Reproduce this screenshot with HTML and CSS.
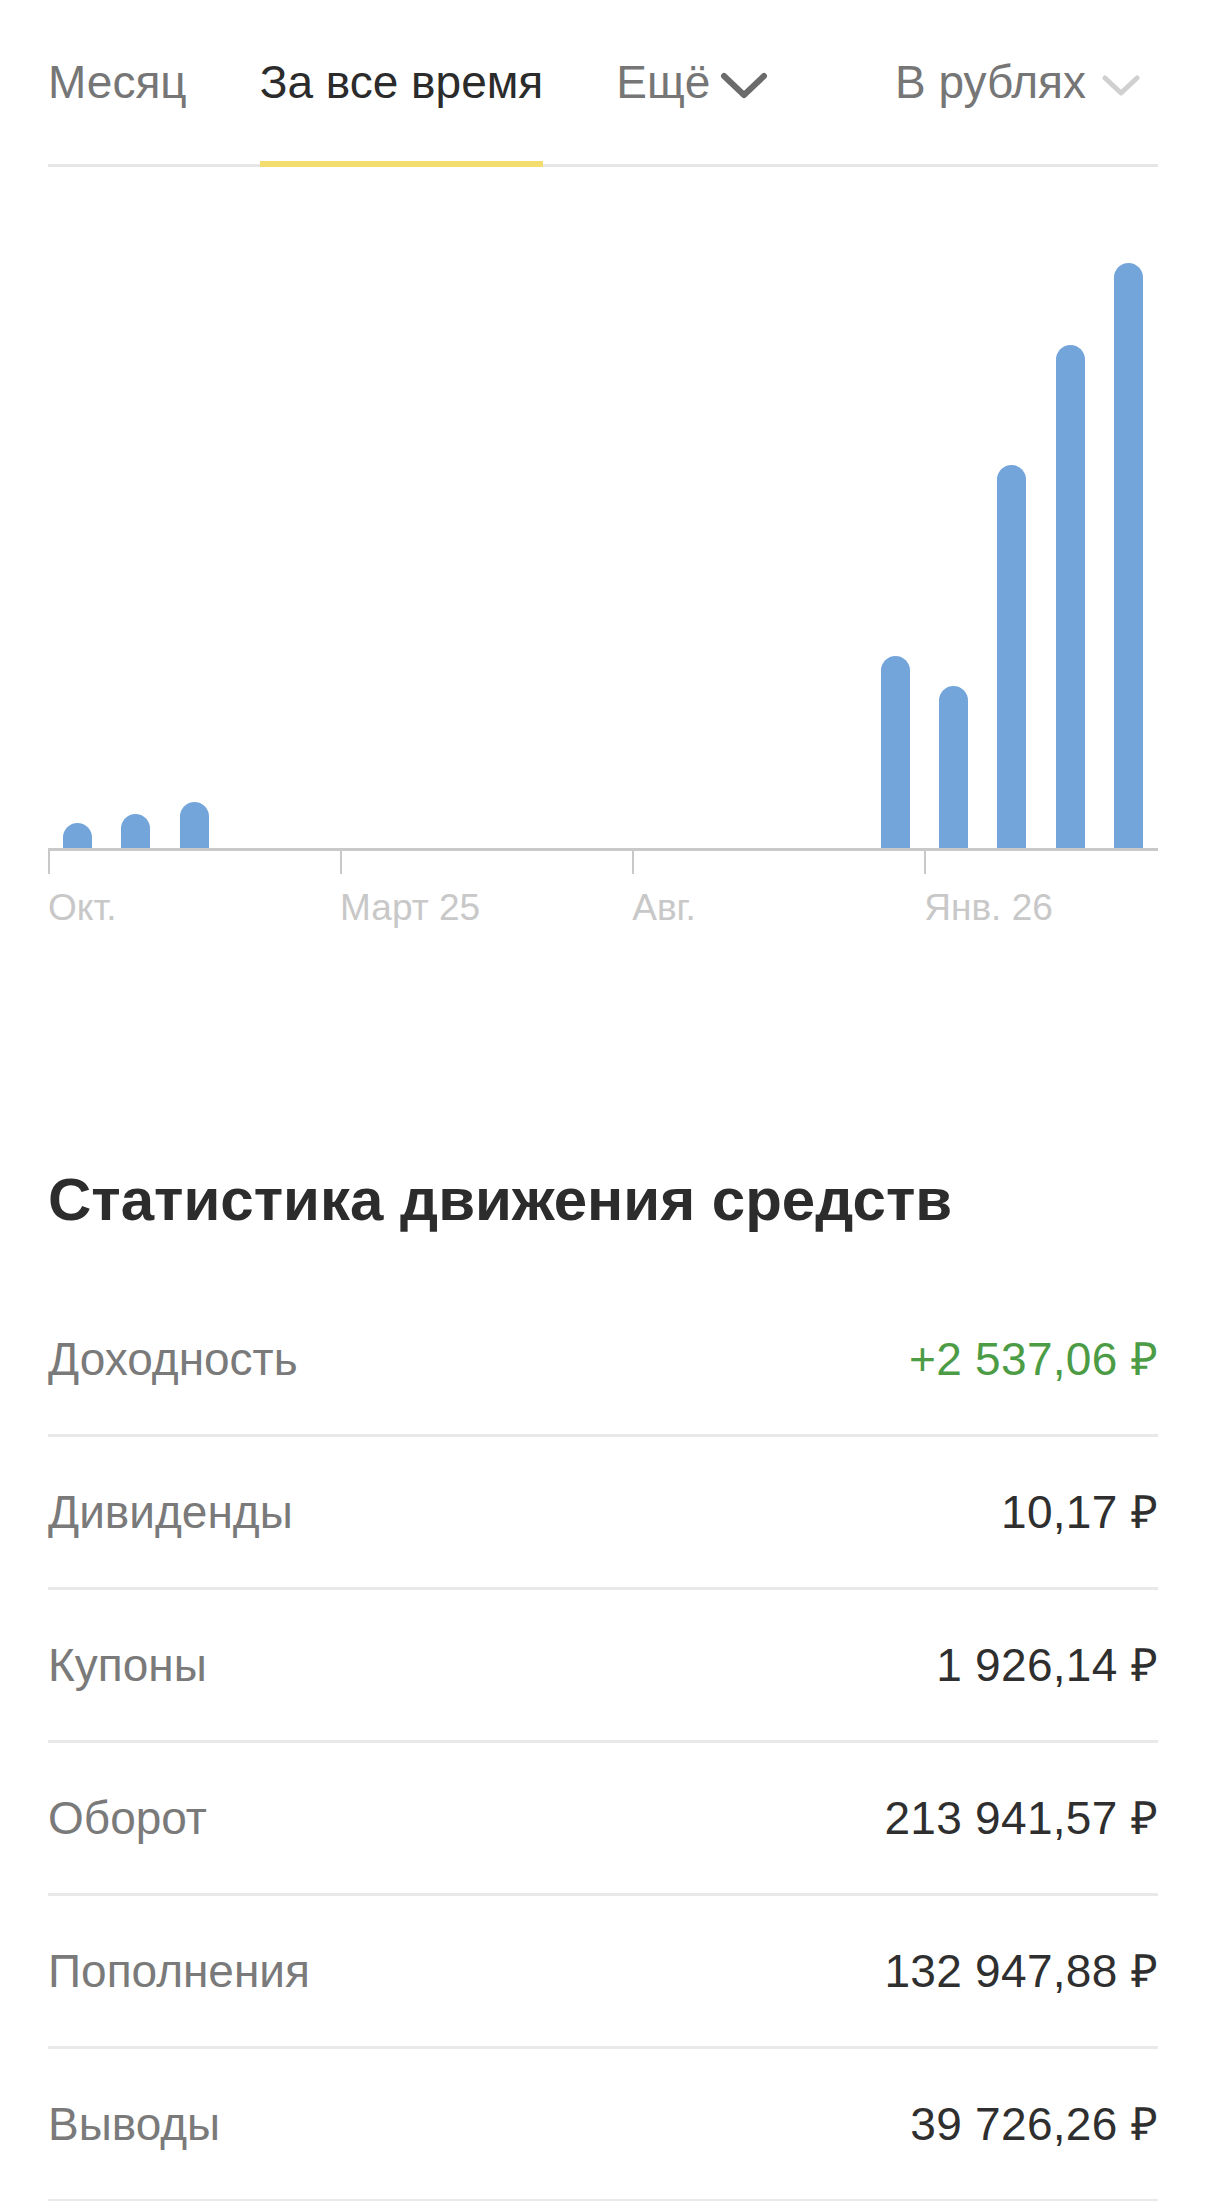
FILE: index.html
```html
<!DOCTYPE html>
<html lang="ru">
<head>
    <meta charset="UTF-8">
    <meta name="viewport" content="width=device-width, initial-scale=1.0">
    <title>Статистика</title>
    <link rel="stylesheet" href="styles.css">
</head>
<body>
    <div class="page">
        <!-- Period tabs -->
        <div class="tabs">
            <div class="tab">Месяц</div>
            <div class="tab active">За все время</div>
            <div class="tab more">Ещё
                <svg class="chevron" width="48" height="28" viewBox="0 0 48 28">
                    <polyline points="4,4 24,23 44,4" fill="none" stroke="#6b6b6b" stroke-width="6" stroke-linecap="round" stroke-linejoin="round"/>
                </svg>
            </div>
            <div class="tab currency">В рублях
                <svg class="chevron" width="38" height="22" viewBox="0 0 38 22">
                    <polyline points="3,3 19,18 35,3" fill="none" stroke="#d0d0d0" stroke-width="5" stroke-linecap="round" stroke-linejoin="round"/>
                </svg>
            </div>
        </div>

        <!-- Bar chart -->
        <div class="chart">
            <div class="plot">
                <div class="slot"><div class="bar" style="height:25px"></div></div>
                <div class="slot"><div class="bar" style="height:34px"></div></div>
                <div class="slot"><div class="bar" style="height:46px"></div></div>
                <div class="slot"></div>
                <div class="slot"></div>
                <div class="slot"></div>
                <div class="slot"></div>
                <div class="slot"></div>
                <div class="slot"></div>
                <div class="slot"></div>
                <div class="slot"></div>
                <div class="slot"></div>
                <div class="slot"></div>
                <div class="slot"></div>
                <div class="slot"><div class="bar" style="height:192px"></div></div>
                <div class="slot"><div class="bar" style="height:162px"></div></div>
                <div class="slot"><div class="bar" style="height:383px"></div></div>
                <div class="slot"><div class="bar" style="height:503px"></div></div>
                <div class="slot"><div class="bar" style="height:585px"></div></div>
            </div>
            <div class="axis">
                <div class="tick"></div>
                <div class="tick"></div>
                <div class="tick"></div>
                <div class="tick last"></div>
            </div>
            <div class="axis-labels">
                <div class="axis-label">Окт.</div>
                <div class="axis-label">Март 25</div>
                <div class="axis-label">Авг.</div>
                <div class="axis-label last">Янв. 26</div>
            </div>
        </div>

        <!-- Stats -->
        <h2 class="stats-title">Статистика движения средств</h2>
        <div class="stats">
            <div class="stat-row">
                <span class="stat-name">Доходность</span>
                <span class="stat-value positive">+2 537,06 ₽</span>
            </div>
            <div class="stat-row">
                <span class="stat-name">Дивиденды</span>
                <span class="stat-value">10,17 ₽</span>
            </div>
            <div class="stat-row">
                <span class="stat-name">Купоны</span>
                <span class="stat-value">1 926,14 ₽</span>
            </div>
            <div class="stat-row">
                <span class="stat-name">Оборот</span>
                <span class="stat-value">213 941,57 ₽</span>
            </div>
            <div class="stat-row">
                <span class="stat-name">Пополнения</span>
                <span class="stat-value">132 947,88 ₽</span>
            </div>
            <div class="stat-row">
                <span class="stat-name">Выводы</span>
                <span class="stat-value">39 726,26 ₽</span>
            </div>
        </div>
    </div>
</body>
</html>
```

FILE: styles.css
```css
body {
    margin: 0;
    background: #fff;
    font-family: "Liberation Sans", Arial, sans-serif;
    color: #2e2e2e;
}
.page {
    padding: 0 48px;
}

/* tabs */
.tabs {
    display: flex;
    gap: 73px;
    border-bottom: 3px solid #e6e6e6;
}
.tab {
    display: flex;
    align-items: center;
    padding: 60px 0 56px;
    margin-bottom: -3px;
    border-bottom: 6px solid transparent;
    font-size: 46px;
    line-height: 45px;
    color: #767676;
}
.tab.active {
    color: #2b2b2b;
    border-bottom-color: #f3dd6e;
}
.tab .chevron {
    margin-top: 6px;
}
.tab.more .chevron {
    margin-left: 10px;
}
.tab.currency {
    margin-left: auto;
    padding-right: 18px;
}
.tab.currency .chevron {
    margin-left: 16px;
}

/* chart */
.plot {
    display: grid;
    grid-template-columns: repeat(19, 1fr);
    align-items: end;
    height: 681px;
}
.slot {
    display: flex;
    justify-content: center;
}
.bar {
    width: 29px;
    background: #74a5da;
    border-radius: 14.5px 14.5px 0 0;
}
.axis {
    display: grid;
    grid-template-columns: repeat(19, 1fr);
    height: 23px;
    border-top: 3px solid #c9c9c9;
}
.tick {
    grid-column: span 5;
    border-left: 2px solid #c9c9c9;
}
.tick.last {
    grid-column: span 4;
}
.axis-labels {
    display: grid;
    grid-template-columns: repeat(19, 1fr);
    margin-top: 15px;
}
.axis-label {
    grid-column: span 5;
    font-size: 37px;
    line-height: 37px;
    color: #c8c8c8;
    white-space: nowrap;
}
.axis-label.last {
    grid-column: span 4;
}

/* stats */
.stats-title {
    margin: 244px 0 54px;
    font-size: 60px;
    line-height: 60px;
    font-weight: bold;
    color: #2c2c2c;
}
.stat-row {
    display: flex;
    justify-content: space-between;
    align-items: center;
    height: 150px;
    border-bottom: 3px solid #e9e9e9;
    font-size: 46px;
    line-height: 45px;
}
.stat-name {
    color: #7a7a7a;
}
.stat-value {
    color: #2f2f2f;
    letter-spacing: 0.3px;
}
.stat-value.positive {
    color: #4c9b45;
}
```
